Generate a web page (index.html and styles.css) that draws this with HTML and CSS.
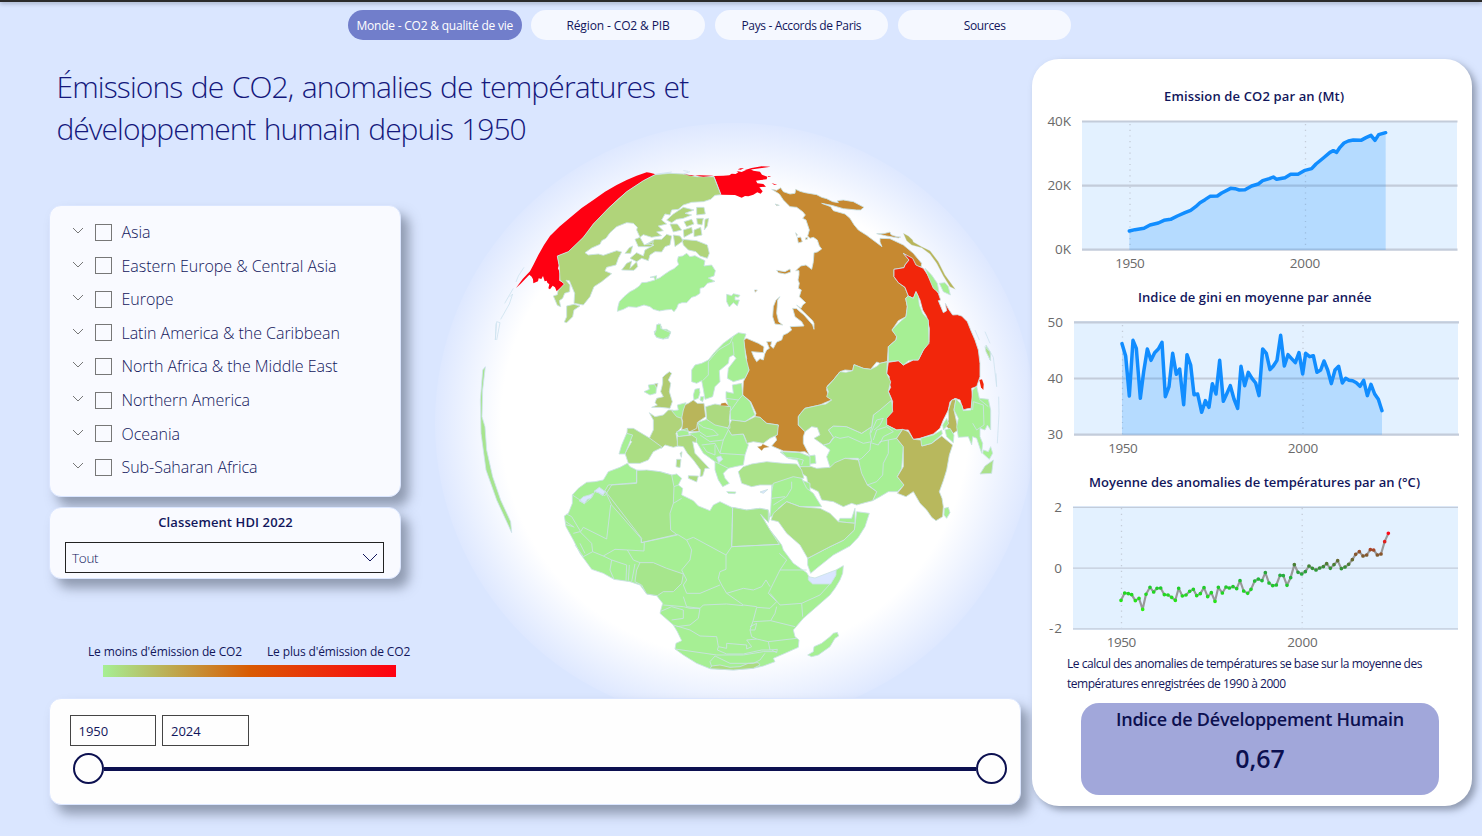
FILE: index.html
```html
<!DOCTYPE html>
<html lang="fr">
<head>
<meta charset="utf-8">
<title>Monde - CO2 &amp; qualité de vie</title>
<link rel="stylesheet" href="styles.css">
</head>
<body>
<svg class="globe" viewBox="430 110 620 620" aria-hidden="true">
  <defs>
    <radialGradient id="halo"><stop offset="0" stop-color="#fff"/><stop offset=".78" stop-color="#fff"/><stop offset="1" stop-color="#dee8ff"/></radialGradient>
  </defs>
  <circle cx="735" cy="423" r="300" fill="url(#halo)"/>
  <!-- far rim coastlines -->
  <g class="land" transform="translate(470 150) scale(.33333)">
    <path class="rim" d="M162 352L145 378L138 396M130 415L104 460M120 440L128 432L118 462L92 508M78 520L76 570L80 515L90 518L80 570"/>
    <path class="rim" d="M38 660L31 750L33 850L48 960L80 1050L125 1148L122 1115L92 1050L68 980L50 900L45 830L36 800L38 720L46 650Z" fill="#a6e48e"/>
    <path class="usa" fill="#ff0012" d="M138 414L158 387L180 364L190 345L205 315L222 285L240 258L268 230L300 203L335 174L370 150L405 125L440 105L470 90L500 77L530 67L540 68L557 73L520 92L470 125L445 146L415 175L392 200L370 222L355 243L340 262L318 285L295 305L262 318L264 332L267 345L264 355L270 370L268 392L286 402L275 412L260 424L255 412L248 407L240 418L235 415L238 403L232 398L230 392L224 394L219 378L214 387L206 385L204 394L190 400L189 388L185 380L178 374L165 388L152 401Z"/>
    <path fill="#b0d47a" d="M555 74L600 70L640 72L680 80L732 80L753 134L735 136L722 148L700 155L665 157L640 165L625 178L605 180L600 195L585 192L575 210L590 222L565 228L580 242L560 246L575 257L545 262L520 254L510 262L500 240L502 232L490 220L470 218L440 230L420 248L408 265L395 272L390 283L365 294L345 308L355 315L385 312L400 316L440 302L455 306L445 325L438 345L410 352L405 363L425 371L395 395L372 410L360 440L340 465L312 460L314 430L298 392L288 391L300 405L299 425L284 430L278 445L268 452L272 470L262 466L250 438L262 434L264 422L283 402L270 390L268 350L262 318L295 305L340 262L370 222L415 175L470 125L520 92Z"/>
    <path fill="#b0d47a" d="M290 468L312 463L330 468L312 480L308 500L290 518L283 516L290 500ZM455 360L470 340L485 333L480 355L500 335L503 350L492 361ZM480 325L500 308L520 318L525 300L552 285L530 282L555 268L575 268L590 253L605 258L600 285L585 290L575 306L555 305L540 315L535 332L515 325L500 335ZM465 310L478 293L488 288L482 310ZM495 268L510 262L523 285L550 275L545 290L505 290ZM590 210L610 192L640 172L672 180L645 190L665 195L640 205L620 208L605 218ZM680 172L702 172L706 192L680 195ZM600 222L622 222L635 240L610 246ZM642 215L665 208L672 222L650 230ZM680 205L700 205L696 225L682 222ZM640 240L665 232L668 248L642 262ZM672 240L692 232L696 255L672 260ZM610 255L630 258L640 272L615 290ZM636 268L680 272L712 285L718 310L712 325L690 318L678 305L655 300L640 285ZM705 208L716 205L712 228L703 240Z"/>
    <path fill="#a6ef94" d="M442 484L444 470L448 455L462 440L480 425L494 418L508 408L515 398L530 397L555 390L552 382L540 382L560 377L558 388L570 383L585 372L600 362L612 356L626 344L622 332L625 320L638 318L650 310L660 320L675 317L690 325L705 332L702 348L725 345L736 362L732 378L715 384L735 394L712 400L702 412L690 415L690 430L678 438L665 442L650 458L636 458L625 462L620 475L612 485L605 478L585 480L568 483L550 478L540 470L522 465L500 472L475 470L460 478Z"/>
    <path fill="#a6ef94" d="M552 545L560 540L560 527L567 521L575 530L575 538L590 538L602 545L595 565L578 567L560 562Z"/>
    <path class="usa" fill="#ff0012" d="M732 78L760 77L778 76L785 71L797 72L805 67L800 63L815 66L828 60L842 58L850 62L870 65L876 74L892 80L890 88L872 90L858 92L862 100L880 102L888 110L868 112L878 124L872 131L862 127L850 134L835 139L825 138L815 143L795 135L753 134ZM640 73L665 78L690 76L732 77L700 80ZM803 58L812 55L822 55L812 59ZM825 60L845 54L875 49L902 50L870 55L848 58ZM893 78L904 79L896 81ZM905 99L922 105L912 104Z"/>
    <path class="border" d="M732 80L753 134"/>
    <path class="rim" d="M555 73L605 66M640 72L660 65M640 62L655 64"/>
    <path fill="#a6ef94" d="M770 433L785 437L790 431L810 436L805 442L795 440L795 450L808 450L802 468L790 458L778 471L770 455Z"/>
  </g>
  <g class="land" transform="translate(730 150) scale(.33333)">
    <path fill="#c68931" d="M125 118L140 121L152 113L160 125L180 132L195 130L197 118L210 124L225 128L260 134L275 142L290 146L308 155L325 158L322 152L340 150L370 155L402 172L392 180L380 180L340 176L305 166L275 160L302 170L310 182L345 192L360 205L372 224L385 240L410 256L456 290L450 276L450 265L480 266L520 285L550 310L575 340L574 350L560 350L548 332L520 310L537 330L525 345L522 353L492 358L492 380L505 398L525 412L535 438L527 445L532 470L528 500L505 512L486 540L500 558L498 570L475 590L472 635L450 640L440 636L422 658L400 655L372 644L368 662L345 660L330 665L310 690L292 708L290 720L298 740L305 750L285 758L270 765L225 775L212 790L205 800L205 825L225 845L220 860L220 880L238 915L225 905L210 906L160 903L125 888L140 870L135 855L145 825L110 820L90 802L75 800L78 790L62 755L50 745L38 735L40 695L57 660L47 640L50 625L47 610L43 590L40 570L50 565L85 580L102 590L100 608L65 605L72 622L80 635L90 626L100 630L104 612L110 600L118 595L110 575L125 575L122 588L130 595L140 576L155 570L160 555L172 550L185 540L180 530L222 528L215 515L195 500L188 475L200 476L210 485L222 495L235 510L248 525L252 538L252 520L248 512L225 490L200 465L213 475L218 465L227 458L208 440L214 420L205 415L208 400L204 390L207 375L207 362L197 362L205 355L212 348L228 345L245 358L248 345L250 335L252 308L262 306L275 297L268 288L262 270L250 262L240 265L233 258L238 240L233 225L228 210L218 205L226 195L218 185L200 172L180 170L160 150L148 132ZM150 440L143 450L140 490L146 515L158 525L135 522L128 500L130 470L138 450ZM140 361L165 365L180 357L182 366L165 372L145 368ZM202 263L212 261L217 275L205 279ZM197 248L202 254L200 259ZM226 264L232 262L232 268L227 269ZM73 420L82 420L76 427ZM135 162L148 166L140 167ZM440 251L465 250L480 246L483 254L500 260L512 261L505 264L470 258Z"/>
    <path fill="#f2260b" d="M520 310L548 325L558 345L580 355L600 385L612 410L625 430L632 450L625 452L640 488L650 482L646 460L656 478L668 495L682 494L695 498L712 515L722 540L735 570L745 600L750 640L750 680L740 710L725 715L728 745L725 775L712 776L700 780L690 750L675 745L660 755L655 780L640 810L630 835L610 852L570 865L550 868L535 840L500 840L470 825L466 812L470 800L485 785L488 755L482 740L475 725L482 712L475 695L478 680L470 670L475 637L505 632L520 645L550 630L565 630L580 600L597 575L598 535L590 500L578 480L570 450L558 425L550 445L535 438L525 412L505 398L492 380L492 358L522 353L525 345L537 330Z"/>
    <path fill="#a6ef94" d="M535 438L550 445L558 425L565 440L568 465L578 490L595 510L597 580L580 600L565 630L550 630L535 632L520 645L505 632L475 635L475 590L498 570L500 560L486 540L505 520L528 500L532 470L527 445Z"/>
    <path class="thin" fill="#b9b55a" d="M520 250L535 258L548 270L550 276L575 290L600 302L625 335L645 375L676 418L660 410L640 378L620 340L600 312L575 293L545 285L530 272Z"/>
    <path fill="#a6ef94" d="M585 355L605 375L622 400L628 430L610 415L595 380ZM628 400L645 398L655 410L661 435L640 425Z"/>
    <path class="rim" d="M735 540L748 570M765 545L780 580M772 590L790 622L800 710L798 670M806 740L807 790L802 880"/>
    <path class="usa" fill="#f2260b" d="M748 690L756 688L761 702L760 720L753 712Z"/>
    <path fill="#a6ef94" d="M768 585L782 610L780 630L768 600Z"/>
  </g>
  <g class="land" transform="translate(780 330) scale(.33333)">
    <path fill="#a6ef94" d="M335 210L338 245L320 265L320 285L350 300L368 298L350 325L370 350L365 415L352 440L372 465L352 485L325 485L300 500L278 512L290 485L260 462L240 425L235 385L195 385L150 412L140 380L150 360L130 345L148 340L160 322L145 300L160 288L200 290L245 310L275 290L280 255Z"/>
    <path fill="#abdf85" d="M322 95L300 100L292 108L272 118L250 115L222 104L218 122L198 127L180 125L160 150L140 172L145 185L140 200L155 210L138 222L120 225L75 235L62 250L55 260L55 285L75 305L95 290L112 293L120 315L102 325L130 345L148 340L160 322L145 300L160 288L200 290L245 310L275 290L280 255L300 240L335 210L325 185L332 155L320 130Z"/>
    <path fill="#a6ef94" d="M0 366L60 370L85 378L105 375L108 400L70 405L50 390L25 385Z"/>
    <path fill="#abdc81" d="M60 410L80 405L110 415L150 412L165 398L195 385L235 390L245 430L262 465L290 485L278 512L255 518L230 525L215 520L190 530L160 515L125 510L115 485L85 470L80 440L65 430Z"/>
    <path fill="#b8b85d" d="M368 298L385 305L400 328L425 330L427 348L455 340L485 318L518 345L508 375L500 420L490 452L478 485L486 505L490 530L488 560L468 572L455 562L440 540L420 520L400 485L378 500L352 490L372 465L352 440L370 410L370 350L350 325ZM505 240L515 210L528 208L522 240L535 300L520 310L500 290L490 300L505 270Z"/>
    <path fill="#a6ef94" d="M422 325L460 315L485 300L487 312L455 340L425 348ZM488 285L500 265L506 280L490 300ZM495 300L510 295L522 315L520 338L500 320ZM528 206L545 225L550 242L573 240L578 180L590 168L598 205L625 208L632 240L632 300L622 285L615 300L600 295L600 320L608 340L605 370L590 325L578 320L575 345L565 320L535 322L530 290L535 265L522 240ZM610 360L625 365L632 350L638 370L628 388L608 370ZM493 535L505 532L510 548L500 565L492 555Z"/>
    <path fill="#abe08a" d="M600 432L615 408L640 390L635 430ZM615 50L630 65L632 92L618 65Z"/>
    <path class="edge" d="M148 340L165 320L180 325L205 320L250 340L275 335L270 310L275 290M235 390L245 385L270 360L272 338L295 345L300 335L325 330L325 370L310 400L308 435L290 455L262 465M272 310L290 270L310 265L300 285L282 300M280 330L290 300L320 290L340 305L310 320L300 340M325 330L350 325M578 240L580 215L610 225L612 285L590 300L578 280M598 208L625 230M0 460L35 445L42 495L0 515M60 375L65 390L80 405M25 385L45 378"/>
  </g>
  <g class="land" transform="translate(600 320) scale(.33333)">
    <path fill="#a6ef94" d="M275 185L275 150L285 135L305 130L325 120L345 95L370 70L400 48L415 38L438 42L432 60L437 110L447 150L435 175L400 185L382 175L385 145L408 115L400 105L388 112L385 130L358 152L360 185L345 200L338 230L315 238L310 208L305 182L290 190ZM280 225L285 208L298 205L300 218L295 235L282 240ZM302 230L312 230L308 245L300 240ZM163 42L168 32L170 14L182 12L182 25L212 38L206 50L190 57L170 52ZM132 215L148 208L145 195L170 192L168 220L150 225ZM397 195L425 190L428 225L450 245L465 285L450 295L435 305L392 300L390 275L378 235L378 215L400 220Z"/>
    <path fill="#b0cb70" d="M188 190L188 172L195 165L208 155L215 160L205 180L212 190L208 215L217 245L210 265L180 262L155 262L172 255L165 248L170 235L190 230L182 215ZM163 192L174 190L170 205Z"/>
    <path fill="#b0d47a" d="M148 278L165 290L190 285L205 270L220 270L245 295L248 318L228 340L235 378L220 382L195 375L185 385L148 355L160 330L160 300Z"/>
    <path fill="#b9b55a" d="M245 258L265 250L280 240L292 250L312 250L317 290L295 305L298 335L270 335L245 330L248 305L243 285Z"/>
    <path fill="#abde83" d="M82 325L100 325L150 355L187 382L160 395L145 420L120 430L85 430L75 400L95 365L80 350Z"/>
    <path fill="#a6ef94" d="M80 340L98 345L75 402L57 402L65 375ZM215 272L235 270L232 255L258 248L250 270L245 295L230 290ZM230 335L262 325L268 345L235 350ZM292 308L320 298L385 325L395 345L430 342L445 375L435 405L430 435L405 440L385 445L370 460L375 475L388 490L368 500L355 480L345 450L345 425L310 400L292 370L268 340L298 335ZM515 495L580 470L630 490L630 540L515 540ZM545 395L600 398L630 410L630 440L600 440L590 415L560 412ZM380 515L408 516L405 521L385 520Z"/>
    <path fill="#acda80" d="M317 260L345 252L392 260L388 300L390 325L345 315L320 298ZM232 350L275 345L290 355L288 368L278 365L285 400L328 445L315 445L308 468L300 470L302 450L280 420L262 400L250 380L232 378ZM230 418L243 418L240 443L228 440ZM240 400L246 395L244 412ZM265 467L295 468L290 486L265 475ZM383 325L395 300L435 305L465 290L480 292L500 310L535 315L532 345L510 355L490 370L460 365L440 370L430 342L395 345Z"/>
    <path class="thin" fill="#c68931" d="M361 257L364 250L376 248L386 258ZM472 380L484 378L488 372L508 381L492 384L485 392Z"/>
    <path fill="#abe38a" d="M415 455L430 440L455 432L500 425L550 430L590 432L605 450L612 475L580 475L545 485L520 495L480 495L455 500L425 490Z"/>
    <path class="edge" d="M400 48L390 70L355 90L325 125L325 165L308 182M398 65L402 105M245 330L270 335L290 325L292 310M292 308L310 322L340 330L355 345L320 350L298 335M300 345L330 365L370 360L385 330M305 375L345 370L360 400L435 405M310 380L320 395L345 405L345 375M370 360L360 400M345 425L375 440L385 445M378 235L415 240L428 225M390 275L415 240M430 342L440 365M590 415L610 420L605 435"/>
    <path fill="#dae6ff" stroke="none" d="M350 412L362 408L368 418L356 428ZM480 516L504 508L490 520Z"/>
  </g>
  <g class="land" transform="translate(540 450) scale(.33333)">
    <path fill="#a6ef94" d="M262 40L270 50L290 60L320 62L360 65L395 75L410 72L425 85L415 105L428 115L425 135L460 152L475 168L510 182L520 165L540 155L575 172L620 180L660 175L685 180L690 200L685 217L662 193L690 240L710 265L725 285L730 300L760 340L800 368L810 385L820 400L870 400L885 380L888 360L910 347L908 370L900 390L885 415L870 435L830 470L790 505L760 540L765 560L777 570L775 592L735 610L700 625L705 635L670 648L640 655L580 660L510 656L470 640L430 615L405 597L408 580L425 572L412 545L400 525L360 490L368 460L350 437L320 432L300 405L270 395L222 388L190 370L155 358L120 310L100 270L78 230L73 198L85 190L97 160L97 135L115 115L140 97L165 95L190 90L205 65L240 52ZM803 615L820 605L822 590L845 580L870 560L880 550L892 547L896 558L885 565L870 590L835 615L815 620Z"/>
    <path fill="#a6e68c" d="M290 62L320 60L360 65L395 75L402 110L400 160L390 190L392 240L412 255L305 278L303 265L215 165L195 122L205 105L290 98ZM578 172L620 180L660 175L685 180L685 217L662 193L690 240L718 283L575 290ZM300 338L340 338L380 355L430 372L425 400L400 425L370 425L352 437L320 432L305 405L285 395L290 360Z"/>
    <path fill="#abdc81" d="M515 648L540 645L570 652L600 650L625 640L655 638L660 645L640 655L580 660L510 656Z"/>
    <path fill="#a6ef94" d="M700 100L760 80L785 85L800 115L820 130L845 170L780 170L740 155L715 175L715 195L690 200L692 180L695 125ZM803 325L870 290L912 270L943 240L950 185L988 190L975 230L955 262L930 288L880 315L830 355L812 370L803 345ZM895 215L900 205L935 205L945 175L945 220Z"/>
    <path fill="#abdf85" d="M700 190L740 155L780 170L840 175L870 190L895 215L945 220L943 240L912 270L870 290L803 325L780 285L740 250L715 215L693 210Z"/>
    <path fill="#dae6ff" stroke="none" d="M117 152L130 140L148 135L160 130L153 145L142 148L133 161ZM162 124L178 112L196 125L188 137L176 128ZM805 380L825 384L888 360L888 375L872 402L818 402L805 390Z"/>
    <path class="edge" d="M97 135L120 150L133 161L155 143L165 124L195 137L215 105L290 100L290 60M195 122L305 265L303 278L412 253M212 165L200 267L130 232L122 245L95 200L80 192M78 215L103 232M78 224L100 230M100 250L120 245L155 280L158 305L130 320L105 285M120 280L135 310M158 305L190 318L215 330L210 360L222 388M190 318L225 298L262 300L280 330L300 338M262 300L312 303L313 278M215 330L260 345L258 392M268 345L265 392M285 342L275 395M402 110L415 105M400 160L425 145M412 253L440 270L460 262L558 315L575 290L578 172M558 315L558 358L540 365L535 385L545 405L560 430L610 465L650 470M440 270L455 300L450 330L425 360L440 390L430 405L440 430L480 430L540 405M575 290L718 283M718 310L740 330L720 360L700 400L685 430L710 455L690 475L650 472L640 510L630 540L635 560L650 567M560 430L610 415L640 420L665 410L678 390L690 410M720 360L800 360M690 430L720 465L785 460L840 435L870 402M785 460L788 500M710 470L705 490L692 512L640 515M692 512L765 530M430 440L440 470L480 475L490 465L560 462L610 467M370 465L430 470L450 475L480 475L475 505L450 525L410 530M360 485L395 470L430 480L430 505L395 510M400 525L450 540L480 558L530 560L535 590L560 595L560 580L620 585L620 597L635 590L620 570L650 567L685 575L690 600L665 600L610 612L560 612L532 600L535 590M405 597L530 615L610 615L670 605L710 605M515 650L510 635L525 618M525 618L570 640L640 640L660 630L675 610M685 575L770 565M690 600L712 598L710 608L695 600M630 530L650 520L645 540L630 540M755 95L755 115L740 140L700 165M695 145L735 140"/>
  </g>
</svg>

<div class="topbar"></div>
<nav class="tabs">
  <a class="tab active">Monde - CO2 &amp; qualité de vie</a>
  <a class="tab t2">Région - CO2 &amp; PIB</a>
  <a class="tab t3">Pays - Accords de Paris</a>
  <a class="tab t4">Sources</a>
</nav>
<div class="page">
  <main class="left">
    <h1><span class="l1">Émissions de CO2, anomalies de températures et</span><br><span class="l2">développement humain depuis 1950</span></h1>
    <div class="filters">
      <ul class="card regions">
        <li><svg class="chev" viewBox="0 0 12 8"><path d="M1 1L6 6L11 1"/></svg><i></i><span>Asia</span></li>
        <li><svg class="chev" viewBox="0 0 12 8"><path d="M1 1L6 6L11 1"/></svg><i></i><span>Eastern Europe &amp; Central Asia</span></li>
        <li><svg class="chev" viewBox="0 0 12 8"><path d="M1 1L6 6L11 1"/></svg><i></i><span>Europe</span></li>
        <li><svg class="chev" viewBox="0 0 12 8"><path d="M1 1L6 6L11 1"/></svg><i></i><span>Latin America &amp; the Caribbean</span></li>
        <li><svg class="chev" viewBox="0 0 12 8"><path d="M1 1L6 6L11 1"/></svg><i></i><span>North Africa &amp; the Middle East</span></li>
        <li><svg class="chev" viewBox="0 0 12 8"><path d="M1 1L6 6L11 1"/></svg><i></i><span>Northern America</span></li>
        <li><svg class="chev" viewBox="0 0 12 8"><path d="M1 1L6 6L11 1"/></svg><i></i><span>Oceania</span></li>
        <li><svg class="chev" viewBox="0 0 12 8"><path d="M1 1L6 6L11 1"/></svg><i></i><span>Sub-Saharan Africa</span></li>
      </ul>
      <div class="card hdi">
        <h2>Classement HDI 2022</h2>
        <div class="select"><span>Tout</span><svg viewBox="0 0 16 10"><path d="M1 1L8 8L15 1"/></svg></div>
      </div>
    </div>
    <div class="legend">
      <div class="legend-labels"><span>Le moins d'émission de CO2</span><span>Le plus d'émission de CO2</span></div>
      <div class="legend-bar"></div>
    </div>
    <div class="card period">
      <div class="years"><span>1950</span><span>2024</span></div>
      <div class="slider"><b></b><hr><b></b></div>
    </div>
  </main>
  <aside class="panel">
    <svg class="chart c1" viewBox="1032 84 440 190">
      <text class="title" x="1164" y="101" textLength="180">Emission de CO2 par an (Mt)</text>
      <rect class="plot" x="1082" y="121" width="375" height="129"/>
      <path class="grid thick" d="M1082 121.500H1457.500M1082 185.700H1457.500M1082 249.700H1457.500"/>
      <path class="dots" d="M1130 124V249M1305.500 124V249"/>
      <g transform="translate(1030 50) scale(.33333)">
        <path class="area" d="M298 543L315 539L342 535L360 525L385 519L402 511L422 508L442 498L465 488L482 481L497 470L510 458L525 449L540 439L562 438L575 429L602 415L615 416L628 420L645 419L665 408L685 402L698 392L718 386L730 381L740 388L765 383L782 373L804 373L825 361L845 356L858 342L880 324L900 307L910 302L920 307L930 292L942 279L955 273L970 270L993 271L1008 263L1023 256L1035 271L1046 254L1067 248V600H298Z"/>
        <path class="line" d="M298 543L315 539L342 535L360 525L385 519L402 511L422 508L442 498L465 488L482 481L497 470L510 458L525 449L540 439L562 438L575 429L602 415L615 416L628 420L645 419L665 408L685 402L698 392L718 386L730 381L740 388L765 383L782 373L804 373L825 361L845 356L858 342L880 324L900 307L910 302L920 307L930 292L942 279L955 273L970 270L993 271L1008 263L1023 256L1035 271L1046 254L1067 248"/>
      </g>
      <text class="axis end" x="1071" y="126" textLength="23.500">40K</text><text class="axis end" x="1071" y="190" textLength="23.500">20K</text><text class="axis end" x="1071" y="254">0K</text>
      <text class="axis mid" x="1130" y="268" textLength="29.500">1950</text><text class="axis mid" x="1305" y="268" textLength="30.500">2000</text>
    </svg>
    <svg class="chart c2" viewBox="1032 274 440 190">
      <text class="title" x="1138" y="302" textLength="233.500">Indice de gini en moyenne par année</text>
      <rect class="plot" x="1074" y="321" width="384" height="114"/>
      <path class="grid thick" d="M1074 322.300H1459M1074 378.500H1459M1074 434.700H1459"/>
      <path class="dots" d="M1122.500 325V434M1303 325V434"/>
      <g transform="translate(1030 280) scale(.33333)">
        <path class="area" d="M276 191L287 228L298 348L309 181L319 205L331 355L341 275L352 207L363 241L374 218L385 207L396 187L406 350L417 320L428 220L439 283L449 267L461 374L471 224L482 255L492 344L503 342L515 397L526 362L537 382L547 311L558 342L569 241L580 364L590 342L601 317L612 357L623 385L633 259L644 317L655 277L666 295L677 309L687 347L698 207L709 220L720 269L730 258L741 241L752 166L763 258L774 224L784 235L796 248L807 218L818 282L827 220L839 230L850 227L861 277L872 270L882 243L893 270L904 311L915 270L926 259L937 309L947 295L957 301L968 302L979 308L990 319L1001 301L1012 347L1023 313L1034 342L1045 358L1056 392V464H276Z"/>
        <path class="line" d="M276 191L287 228L298 348L309 181L319 205L331 355L341 275L352 207L363 241L374 218L385 207L396 187L406 350L417 320L428 220L439 283L449 267L461 374L471 224L482 255L492 344L503 342L515 397L526 362L537 382L547 311L558 342L569 241L580 364L590 342L601 317L612 357L623 385L633 259L644 317L655 277L666 295L677 309L687 347L698 207L709 220L720 269L730 258L741 241L752 166L763 258L774 224L784 235L796 248L807 218L818 282L827 220L839 230L850 227L861 277L872 270L882 243L893 270L904 311L915 270L926 259L937 309L947 295L957 301L968 302L979 308L990 319L1001 301L1012 347L1023 313L1034 342L1045 358L1056 392"/>
      </g>
      <text class="axis end" x="1063" y="327">50</text><text class="axis end" x="1063" y="383">40</text><text class="axis end" x="1063" y="439">30</text>
      <text class="axis mid" x="1123" y="453" textLength="29.500">1950</text><text class="axis mid" x="1303" y="453" textLength="30.500">2000</text>
    </svg>
    <svg class="chart c3" viewBox="1032 464 440 190">
      <defs><linearGradient id="heat" gradientUnits="userSpaceOnUse" x1="0" y1="205" x2="0" y2="433"><stop offset="0" stop-color="#ff0818"/><stop offset=".13" stop-color="#d82420"/><stop offset=".24" stop-color="#96502a"/><stop offset=".32" stop-color="#755f30"/><stop offset=".45" stop-color="#358e35"/><stop offset=".55" stop-color="#25af40"/><stop offset=".75" stop-color="#1fd325"/><stop offset="1" stop-color="#2bf010"/></linearGradient></defs>
      <text class="title" x="1089" y="487" textLength="331">Moyenne des anomalies de températures par an (°C)</text>
      <rect class="plot" x="1073" y="506" width="385" height="124"/>
      <path class="grid" d="M1073 507.300H1458M1073 568.200H1458M1073 628.800H1458"/>
      <path class="dots" d="M1121.500 508V628M1302.200 508V628"/>
      <g transform="translate(1030 465) scale(.33333)">
        <path class="trend" d="M273 406L284 384L295 386L305 389L316 407L327 400L338 433L348 388L360 367L371 381L381 370L392 369L403 389L414 390L425 397L436 406L446 370L457 393L468 390L479 379L490 373L500 392L511 386L522 368L533 395L544 383L555 409L565 367L577 384L588 366L598 369L609 365L620 371L630 347L641 378L653 385L663 373L674 348L685 342L696 347L706 323L717 354L728 362L739 360L750 331L760 332L771 361L782 338L793 299L804 322L815 327L826 320L837 303L847 310L858 315L869 309L880 305L890 296L901 310L912 299L923 287L934 311L945 306L956 298L967 284L977 268L988 260L999 273L1010 270L1021 254L1031 255L1042 270L1053 267L1064 230L1075 205"/>
        <path class="points" d="M273 406h.1M284 384h.1M295 386h.1M305 389h.1M316 407h.1M327 400h.1M338 433h.1M348 388h.1M360 367h.1M371 381h.1M381 370h.1M392 369h.1M403 389h.1M414 390h.1M425 397h.1M436 406h.1M446 370h.1M457 393h.1M468 390h.1M479 379h.1M490 373h.1M500 392h.1M511 386h.1M522 368h.1M533 395h.1M544 383h.1M555 409h.1M565 367h.1M577 384h.1M588 366h.1M598 369h.1M609 365h.1M620 371h.1M630 347h.1M641 378h.1M653 385h.1M663 373h.1M674 348h.1M685 342h.1M696 347h.1M706 323h.1M717 354h.1M728 362h.1M739 360h.1M750 331h.1M760 332h.1M771 361h.1M782 338h.1M793 299h.1M804 322h.1M815 327h.1M826 320h.1M837 303h.1M847 310h.1M858 315h.1M869 309h.1M880 305h.1M890 296h.1M901 310h.1M912 299h.1M923 287h.1M934 311h.1M945 306h.1M956 298h.1M967 284h.1M977 268h.1M988 260h.1M999 273h.1M1010 270h.1M1021 254h.1M1031 255h.1M1042 270h.1M1053 267h.1M1064 230h.1M1075 205h.1"/>
      </g>
      <text class="axis end" x="1062" y="512">2</text><text class="axis end" x="1062" y="573">0</text><text class="axis end" x="1062" y="633" textLength="13">-2</text>
      <text class="axis mid" x="1121.500" y="647" textLength="29.500">1950</text><text class="axis mid" x="1302.500" y="647" textLength="30.500">2000</text>
    </svg>
    <p class="note">Le calcul des anomalies de températures se base sur la moyenne des<br>températures enregistrées de 1990 à 2000</p>
    <div class="idh"><h3>Indice de Développement Humain</h3><strong>0,67</strong></div>
  </aside>
</div>
</body>
</html>
```
FILE: styles.css
```css
* { box-sizing: border-box; }
body { margin: 0; width: 1482px; height: 836px; overflow: hidden; position: relative; background: #dae6ff; color: #12165c; font-family: "Open Sans", "Noto Sans", sans-serif; }
h1, h2, h3, p, ul { margin: 0; padding: 0; font-weight: inherit; }
.globe { position: absolute; left: 430px; top: 110px; width: 620px; height: 620px; }
.land path { stroke: #cbe2e6; stroke-width: 2.6; stroke-linejoin: round; }
.land .edge { fill: none; }
.land .border { fill: none; stroke-width: 3; }
.land .usa { stroke: none; }
.land .thin { stroke-width: 1; }
.land .rim { stroke: #cfe3ef; stroke-width: 2.5; }
.land .rim:not([fill]) { fill: none; }
.topbar { height: 2px; background: #2b2b2b; box-shadow: 0 1px 4px rgba(60,70,90,.6); }
.tabs { display: flex; gap: 9.700px; padding: 8px 0 0 348px; height: 38px; position: relative; }
.tab { width: 173.600px; height: 30px; border-radius: 15px; background: #f5f8ff; font-size: 12px; line-height: 31px; text-align: center; letter-spacing: -.35px; white-space: nowrap; }
.tab.active { background: #717ecb; color: #fff; letter-spacing: -.22px; }
.t2 { letter-spacing: -.12px; }
.page { position: relative; display: flex; height: 796px; }
.left { width: 1032px; padding: 26px 0 0 49px; }
h1 { height: 139px; padding-left: 7.500px; font-size: 30px; font-weight: 300; line-height: 42px; word-spacing: 1.500px; white-space: nowrap; color: #14187c; }
.l1 { letter-spacing: -.88px; }
.l2 { letter-spacing: -1px; }
.card { background: #f9faff; border-radius: 12px; border: 1px solid #dbe6ff; box-shadow: 8px 9px 12px rgba(70,80,100,.5); }
.filters { width: 352px; display: flex; flex-direction: column; gap: 10px; }
.regions { height: 292px; list-style: none; padding: 9.500px 0 0 22px; }
.regions li { display: flex; align-items: center; height: 33.550px; font-size: 16px; font-weight: 300; line-height: 32px; letter-spacing: -.03px; white-space: nowrap; }
.chev { width: 12px; height: 8px; fill: none; stroke: #777; margin-top: -2px; }
.regions i { width: 17px; height: 17px; border: 1px solid #777; margin: 0 9.500px 0 11px; }
.hdi { height: 72px; padding: 5px 15px; }
.hdi h2 { text-align: center; font-size: 13px; font-weight: 600; line-height: 18px; letter-spacing: .1px; padding-left: 1px; }
.select { margin-top: 10.500px; height: 31px; border: 1.500px solid #222; display: flex; align-items: center; justify-content: space-between; padding: 2px 5px 0 6px; width: 319px; font-size: 13px; font-weight: 300; letter-spacing: -.3px; }
.select span { font-size: 13.500px; }
.select svg { width: 16px; height: 10px; fill: none; stroke: #12165c; }
.legend { height: 119px; padding-top: 63px; }
.legend-labels { display: flex; gap: 25px; padding-left: 39px; font-size: 12px; line-height: 20px; letter-spacing: -.14px; white-space: nowrap; }
.legend-bar { margin: 3px 0 0 54px; width: 293px; height: 12px; background: linear-gradient(90deg, #a6ef94, #d95b02 50%, #ff0012); }
.period { width: 972px; height: 107px; background: #fefefe; padding: 16px 13px 0 19.500px; }
.years { display: flex; gap: 6px; }
.years span { width: 86.500px; height: 31px; border: 1.500px solid #444; padding-left: 8px; font-size: 13px; line-height: 30px; }
.slider { display: flex; align-items: center; margin: 7px 0 0 3px; }
.slider b { width: 31px; height: 31px; border: 2.500px solid #0c1050; border-radius: 50%; }
.slider hr { flex: 1; margin: 0; border: 0; height: 4px; background: #0c1050; }
.panel { width: 440px; height: 747px; margin-top: 19px; padding-top: 25px; border-radius: 27px; background: #fff; box-shadow: 4px 4px 7px rgba(70,80,100,.5); }
.chart { display: block; width: 440px; height: 190px; }
.title { font-size: 13px; font-weight: 600; fill: #12165c; }
.axis { font-size: 13.500px; fill: #6a6a6a; }
.end { text-anchor: end; }
.mid { text-anchor: middle; }
.plot { fill: #e3f1ff; }
.grid { fill: none; stroke: #c3ccda; stroke-width: 1.300; }
.thick { stroke-width: 2.200; }
.dots { fill: none; stroke: #c4ccd8; stroke-dasharray: 1.200 4.500; stroke-width: 1.300; }
.area { fill: #118dff; fill-opacity: .22; }
.line { fill: none; stroke: #118dff; stroke-width: 10.500; stroke-linejoin: round; stroke-linecap: round; }
.trend { fill: none; stroke: #999; stroke-width: 6.500; stroke-linejoin: round; }
.points { fill: none; stroke: url(#heat); stroke-width: 11; stroke-linecap: round; }
.note { padding-left: 35px; font-size: 12px; line-height: 20px; letter-spacing: -.47px; white-space: nowrap; }
.idh { margin: 9px 0 0 49px; width: 358px; height: 92px; border-radius: 18px; background: #a1a7da; text-align: center; color: #0c1050; }
.idh h3 { font-size: 18px; font-weight: 600; line-height: 33px; letter-spacing: -.25px; }
.idh strong { display: block; font-size: 25px; font-weight: 600; line-height: 45px; }
```
